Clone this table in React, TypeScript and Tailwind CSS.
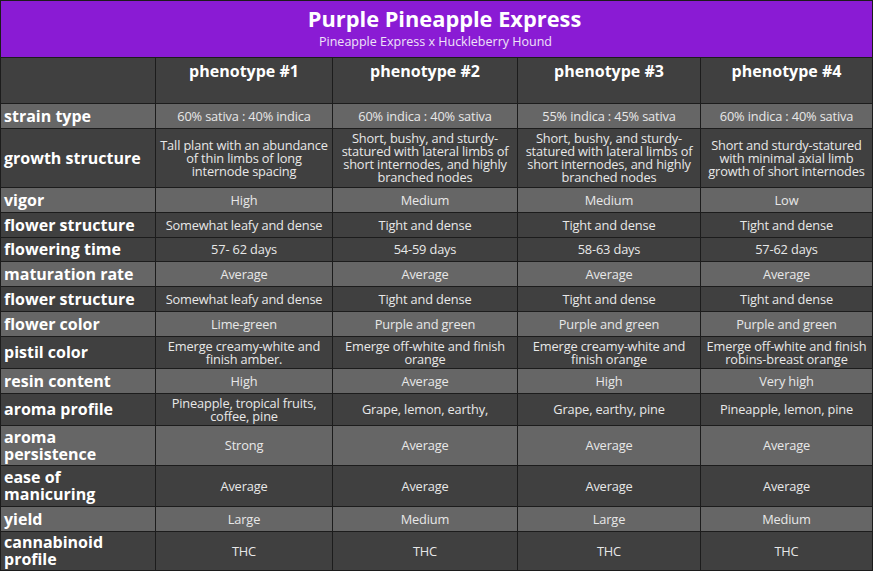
import React from "react";

type Row = { label: string[]; cells: string[][]; h: number; light: boolean };

const rows: Row[] = [
  { label: ["strain type"], cells: [["60% sativa : 40% indica"], ["60% indica : 40% sativa"], ["55% indica : 45% sativa"], ["60% indica : 40% sativa"]], h: 24, light: true },
  {
    label: ["growth structure"],
    cells: [
      ["Tall plant with an abundance", "of thin limbs of long", "internode spacing"],
      ["Short, bushy, and sturdy-", "statured with lateral limbs of", "short internodes, and highly", "branched nodes"],
      ["Short, bushy, and sturdy-", "statured with lateral limbs of", "short internodes, and highly", "branched nodes"],
      ["Short and sturdy-statured", "with minimal axial limb", "growth of short internodes"],
    ],
    h: 58,
    light: false,
  },
  { label: ["vigor"], cells: [["High"], ["Medium"], ["Medium"], ["Low"]], h: 24, light: true },
  { label: ["flower structure"], cells: [["Somewhat leafy and dense"], ["Tight and dense"], ["Tight and dense"], ["Tight and dense"]], h: 24, light: false },
  { label: ["flowering time"], cells: [["57- 62 days"], ["54-59 days"], ["58-63 days"], ["57-62 days"]], h: 23, light: false },
  { label: ["maturation rate"], cells: [["Average"], ["Average"], ["Average"], ["Average"]], h: 24, light: true },
  { label: ["flower structure"], cells: [["Somewhat leafy and dense"], ["Tight and dense"], ["Tight and dense"], ["Tight and dense"]], h: 24, light: false },
  { label: ["flower color"], cells: [["Lime-green"], ["Purple and green"], ["Purple and green"], ["Purple and green"]], h: 24, light: true },
  {
    label: ["pistil color"],
    cells: [
      ["Emerge creamy-white and", "finish amber."],
      ["Emerge off-white and finish", "orange"],
      ["Emerge creamy-white and", "finish orange"],
      ["Emerge off-white and finish", "robins-breast orange"],
    ],
    h: 31,
    light: false,
  },
  { label: ["resin content"], cells: [["High"], ["Average"], ["High"], ["Very high"]], h: 24, light: true },
  {
    label: ["aroma profile"],
    cells: [["Pineapple, tropical fruits,", "coffee, pine"], ["Grape, lemon, earthy,"], ["Grape, earthy, pine"], ["Pineapple, lemon, pine"]],
    h: 31,
    light: false,
  },
  { label: ["aroma", "persistence"], cells: [["Strong"], ["Average"], ["Average"], ["Average"]], h: 39, light: true },
  { label: ["ease of", "manicuring"], cells: [["Average"], ["Average"], ["Average"], ["Average"]], h: 40, light: false },
  { label: ["yield"], cells: [["Large"], ["Medium"], ["Large"], ["Medium"]], h: 24, light: true },
  { label: ["cannabinoid", "profile"], cells: [["THC"], ["THC"], ["THC"], ["THC"]], h: 38, light: false },
];

const font = { fontFamily: '"Open Sans", "Noto Sans", sans-serif' };

export default function App() {
  const heights = [45, ...rows.map((r) => r.h)].map((h) => `${h}px`).join(" ");
  return (
    <div className="bg-white w-[874px] h-[573px]" style={font}>
      <div className="w-[873px] border border-[#1c1c1c] bg-[#1c1c1c] flex flex-col gap-px">
        <div className="h-[56px] bg-[#8a1bd4] flex flex-col items-center justify-start pt-[3px]">
          <div className="text-white font-bold text-[21.8px] leading-[29px] pl-[16px]">Purple Pineapple Express</div>
          <div className="text-[#efe3f8] text-[12.5px] leading-[17px] pr-[2px]">Pineapple Express x Huckleberry Hound</div>
        </div>
        <div
          className="grid grid-cols-[154px_176px_184px_182px_171px] gap-px"
          style={{ gridTemplateRows: heights }}
        >
          <div className="bg-[#404040]" />
          {["phenotype #1", "phenotype #2", "phenotype #3", "phenotype #4"].map((t) => (
            <div key={t} className="bg-[#404040] text-white font-bold text-[16px] leading-[20px] text-center pt-[3px]">
              {t}
            </div>
          ))}
          {rows.map((r, i) => {
            const bg = r.light ? "bg-[#666666]" : "bg-[#404040]";
            return (
              <React.Fragment key={i}>
                <div className={`${bg} flex flex-col justify-center pl-[3px] text-white font-bold text-[16px] leading-[17px]`}>
                  {r.label.map((l) => (
                    <div key={l}>{l}</div>
                  ))}
                </div>
                {r.cells.map((c, j) => (
                  <div
                    key={j}
                    className={`${bg} flex flex-col justify-center items-center text-center text-[#e8e8e8] text-[12.8px] leading-[13px] tracking-[-0.15px]`}
                  >
                    {c.map((l, k) => (
                      <div key={k} className="whitespace-nowrap">
                        {l}
                      </div>
                    ))}
                  </div>
                ))}
              </React.Fragment>
            );
          })}
        </div>
      </div>
    </div>
  );
}
